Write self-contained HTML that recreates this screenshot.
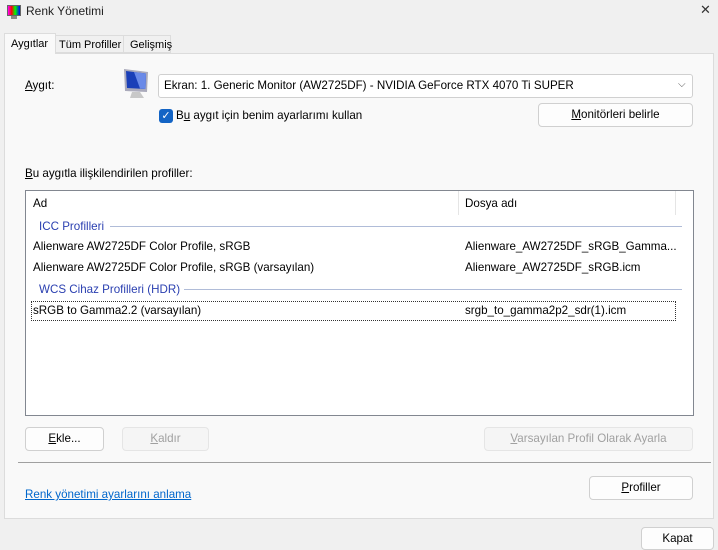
<!DOCTYPE html>
<html><head><meta charset="utf-8"><style>
*{margin:0;padding:0;box-sizing:border-box}
body{width:718px;height:550px;background:#f0f0f0;font-family:"Liberation Sans",sans-serif;font-size:11.6px;color:#000;position:relative;overflow:hidden}
.a{position:absolute;white-space:nowrap}
.btn{position:absolute;background:#fdfdfd;border:1px solid #d0d0d0;border-radius:4px;text-align:center;line-height:21px}
.dis{background:#f5f5f5;border-color:#e5e5e5;color:#a0a0a0}
u{text-decoration:underline}
.blue{color:#2a3fb0}
</style></head><body>
<svg class="a" style="left:6px;top:4px" width="16" height="16" viewBox="0 0 16 16"><rect x="1" y="1" width="14" height="11" fill="#666"/><defs><linearGradient id="g" x1="0" x2="1"><stop offset="0" stop-color="#f0f"/><stop offset=".3" stop-color="#f00"/><stop offset=".6" stop-color="#0f0"/><stop offset="1" stop-color="#00f"/></linearGradient></defs><rect x="2" y="2" width="12" height="9" fill="url(#g)"/><rect x="5" y="12" width="6" height="3" fill="#888"/></svg>
<div class="a" style="left:26px;top:4px;font-size:12px;color:#222">Renk Yönetimi</div>
<div class="a" style="left:700px;top:2px;font-size:13px;color:#333">✕</div>
<div class="a" style="left:4px;top:53px;width:710px;height:466px;background:#f9f9f9;border:1px solid #dcdcdc"></div>
<div class="a" style="left:4px;top:33px;width:52px;height:21px;background:#f9f9f9;border:1px solid #dcdcdc;border-bottom:none;padding:4px 0 0 6px;font-size:11px">Aygıtlar</div>
<div class="a" style="left:56px;top:35px;width:68px;height:18px;background:#f0f0f0;border:1px solid #dcdcdc;border-left:none;padding:3px 0 0 3px;font-size:11px">Tüm Profiller</div>
<div class="a" style="left:124px;top:35px;width:47px;height:18px;background:#f0f0f0;border:1px solid #dcdcdc;border-left:none;padding:3px 0 0 6px;font-size:11px">Gelişmiş</div>
<div class="a" style="left:25px;top:79px"><u>A</u>ygıt:</div>
<svg class="a" style="left:120px;top:67px" width="34" height="34" viewBox="0 0 34 34"><path d="M4 2 L28 5 L27 25 L5 24 Z" fill="#aab"/><path d="M6 4 L26 6.5 L25.5 22 L7 21 Z" fill="#1a3fb8"/><path d="M14 5 L26 6.5 L25.5 22 L20 21.5 Z" fill="#6a8ae8"/><path d="M12 25 L20 25 L24 31 L10 31 Z" fill="#c8c8c8"/></svg>
<div class="a" style="left:158px;top:74px;width:535px;height:24px;background:#fff;border:1px solid #d0d0d0;border-radius:3px;padding:4px 0 0 5px">Ekran: 1. Generic Monitor (AW2725DF) - NVIDIA GeForce RTX 4070 Ti SUPER</div>
<div class="a" style="left:678px;top:79px;font-size:10px;color:#555">⌵</div>
<div class="a" style="left:159px;top:109px;width:14px;height:14px;background:#1364c5;border-radius:3px;color:#fff;font-size:11px;text-align:center;line-height:14px">✓</div>
<div class="a" style="left:176px;top:109px">B<u>u</u> aygıt için benim ayarlarımı kullan</div>
<div class="btn" style="left:538px;top:103px;width:155px;height:24px"><u>M</u>onitörleri belirle</div>
<div class="a" style="left:25px;top:167px"><u>B</u>u aygıtla ilişkilendirilen profiller:</div>
<div class="a" style="left:25px;top:190px;width:669px;height:226px;background:#fff;border:1px solid #828790"></div>
<div class="a" style="left:33px;top:197px">Ad</div>
<div class="a" style="left:458px;top:191px;width:1px;height:24px;background:#e5e5e5"></div>
<div class="a" style="left:675px;top:191px;width:1px;height:24px;background:#e5e5e5"></div>
<div class="a" style="left:465px;top:197px">Dosya adı</div>
<div class="a blue" style="left:39px;top:220px">ICC Profilleri</div>
<div class="a" style="left:110px;top:226px;width:572px;height:1px;background:#b0bcd8"></div>
<div class="a" style="left:33px;top:240px">Alienware AW2725DF Color Profile, sRGB</div>
<div class="a" style="left:465px;top:240px">Alienware_AW2725DF_sRGB_Gamma...</div>
<div class="a" style="left:33px;top:261px">Alienware AW2725DF Color Profile, sRGB (varsayılan)</div>
<div class="a" style="left:465px;top:261px">Alienware_AW2725DF_sRGB.icm</div>
<div class="a blue" style="left:39px;top:283px">WCS Cihaz Profilleri (HDR)</div>
<div class="a" style="left:184px;top:289px;width:498px;height:1px;background:#b0bcd8"></div>
<div class="a" style="left:31px;top:301px;width:645px;height:20px;border:1px dotted #333"></div>
<div class="a" style="left:33px;top:304px">sRGB to Gamma2.2 (varsayılan)</div>
<div class="a" style="left:465px;top:304px">srgb_to_gamma2p2_sdr(1).icm</div>
<div class="btn" style="left:25px;top:427px;width:79px;height:24px"><u>E</u>kle...</div>
<div class="btn dis" style="left:122px;top:427px;width:87px;height:24px"><u>K</u>aldır</div>
<div class="btn dis" style="left:484px;top:427px;width:209px;height:24px"><u>V</u>arsayılan Profil Olarak Ayarla</div>
<div class="a" style="left:18px;top:462px;width:693px;height:1px;background:#a0a0a0"></div>
<div class="a" style="left:25px;top:488px;color:#0066cc;text-decoration:underline">Renk yönetimi ayarlarını anlama</div>
<div class="btn" style="left:589px;top:476px;width:104px;height:24px"><u>P</u>rofiller</div>
<div class="btn" style="left:641px;top:527px;width:73px;height:23px">Kapat</div>
</body></html>
